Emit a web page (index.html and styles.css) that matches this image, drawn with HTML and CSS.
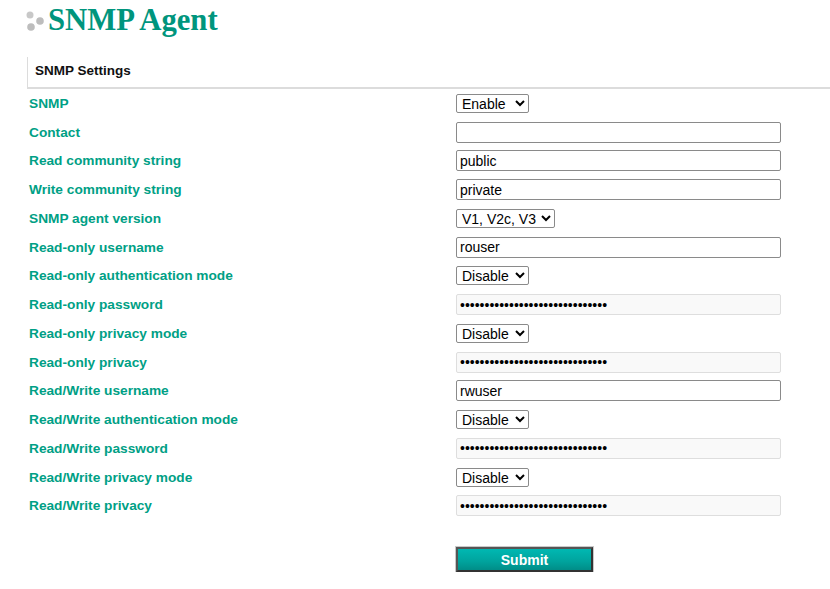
FILE: index.html
```html
<!DOCTYPE html>
<html>
<head>
<meta charset="utf-8">
<link rel="stylesheet" href="styles.css">
</head>
<body>
<div class="page">
  <h1 class="title">
    <svg class="dots" width="22" height="22" viewBox="0 0 22 22">
      <circle cx="4" cy="4" r="3.5" fill="#c8c8c8"/>
      <circle cx="14" cy="10" r="3.8" fill="#bdbdbd"/>
      <circle cx="5" cy="16" r="3.8" fill="#bdbdbd"/>
    </svg>
    <span>SNMP Agent</span>
  </h1>
  <div class="section">SNMP Settings</div>
  <div class="form">
    <div class="row"><label>SNMP</label><select class="sel w73"><option>Enable</option></select></div>
    <div class="row"><label>Contact</label><input class="txt" type="text" value=""></div>
    <div class="row"><label>Read community string</label><input class="txt" type="text" value="public"></div>
    <div class="row"><label>Write community string</label><input class="txt" type="text" value="private"></div>
    <div class="row"><label>SNMP agent version</label><select class="sel w99"><option>V1, V2c, V3</option></select></div>
    <div class="row"><label>Read-only username</label><input class="txt" type="text" value="rouser"></div>
    <div class="row"><label>Read-only authentication mode</label><select class="sel w73"><option>Disable</option></select></div>
    <div class="row"><label>Read-only password</label><input class="txt" type="password" disabled value="xxxxxxxxxxxxxxxxxxxxxxxxxxxxxx"></div>
    <div class="row"><label>Read-only privacy mode</label><select class="sel w73"><option>Disable</option></select></div>
    <div class="row"><label>Read-only privacy</label><input class="txt" type="password" disabled value="xxxxxxxxxxxxxxxxxxxxxxxxxxxxxx"></div>
    <div class="row"><label>Read/Write username</label><input class="txt" type="text" value="rwuser"></div>
    <div class="row"><label>Read/Write authentication mode</label><select class="sel w73"><option>Disable</option></select></div>
    <div class="row"><label>Read/Write password</label><input class="txt" type="password" disabled value="xxxxxxxxxxxxxxxxxxxxxxxxxxxxxx"></div>
    <div class="row"><label>Read/Write privacy mode</label><select class="sel w73"><option>Disable</option></select></div>
    <div class="row"><label>Read/Write privacy</label><input class="txt" type="password" disabled value="xxxxxxxxxxxxxxxxxxxxxxxxxxxxxx"></div>
  </div>
  <div class="actions"><button class="submit" type="button">Submit</button></div>
</div>
</body>
</html>
```
FILE: styles.css
```css
html, body {
  margin: 0;
  padding: 0;
  background: #fff;
}
.page {
  width: 830px;
  font-family: "Liberation Sans", Arial, sans-serif;
}
.title {
  margin: 0;
  height: 57px;
  display: flex;
  align-items: flex-start;
  padding-left: 26px;
  box-sizing: border-box;
  font-family: "Liberation Serif", "Times New Roman", serif;
  font-weight: bold;
  font-size: 30.7px;
  line-height: 36px;
  color: #00957d;
}
.dots {
  margin-top: 11px;
}
.title span {
  margin-top: 2px;
}
.section {
  margin-left: 27px;
  height: 30px;
  border-left: 1px solid #dcdcdc;
  border-bottom: 2px solid #dcdcdc;
  padding-left: 7px;
  font-weight: bold;
  font-size: 13.5px;
  line-height: 27px;
  color: #111;
}
.form {
  padding-left: 29px;
}
.row {
  display: flex;
  align-items: center;
  height: 28.75px;
}
.row label {
  width: 427px;
  flex: none;
  font-weight: bold;
  font-size: 13.7px;
  color: #00a085;
}
.txt {
  box-sizing: border-box;
  width: 325px;
  height: 21px;
  margin: 0;
  padding: 0 3px;
  border: 1px solid #8a8a8a;
  border-radius: 2px;
  font-family: "Liberation Sans", Arial, sans-serif;
  font-size: 14px;
  color: #000;
  background: #fff;
}
.txt:disabled {
  background: #f9f9f9;
  border-color: #dedede;
  color: #000;
}
.sel {
  box-sizing: border-box;
  height: 19px;
  margin: 0;
  padding: 0 0 0 1px;
  border: 1px solid #8a8a8a;
  border-radius: 2px;
  font-family: "Liberation Sans", Arial, sans-serif;
  font-size: 14px;
  color: #000;
  background: #fff;
}
.w73 { width: 73px; }
.w99 { width: 99px; }
.actions {
  padding-left: 456px;
  padding-top: 27px;
}
.submit {
  box-sizing: border-box;
  width: 137px;
  height: 25px;
  margin: 0;
  padding: 0;
  border: 2px solid #333;
  border-top-color: #555;
  border-left-color: #555;
  outline: 1px solid #c8c8c8;
  background: linear-gradient(#00b8b2, #00a39d 60%, #008d88);
  color: #fff;
  font-family: "Liberation Sans", Arial, sans-serif;
  font-weight: bold;
  font-size: 14px;
  line-height: 20px;
}
```
